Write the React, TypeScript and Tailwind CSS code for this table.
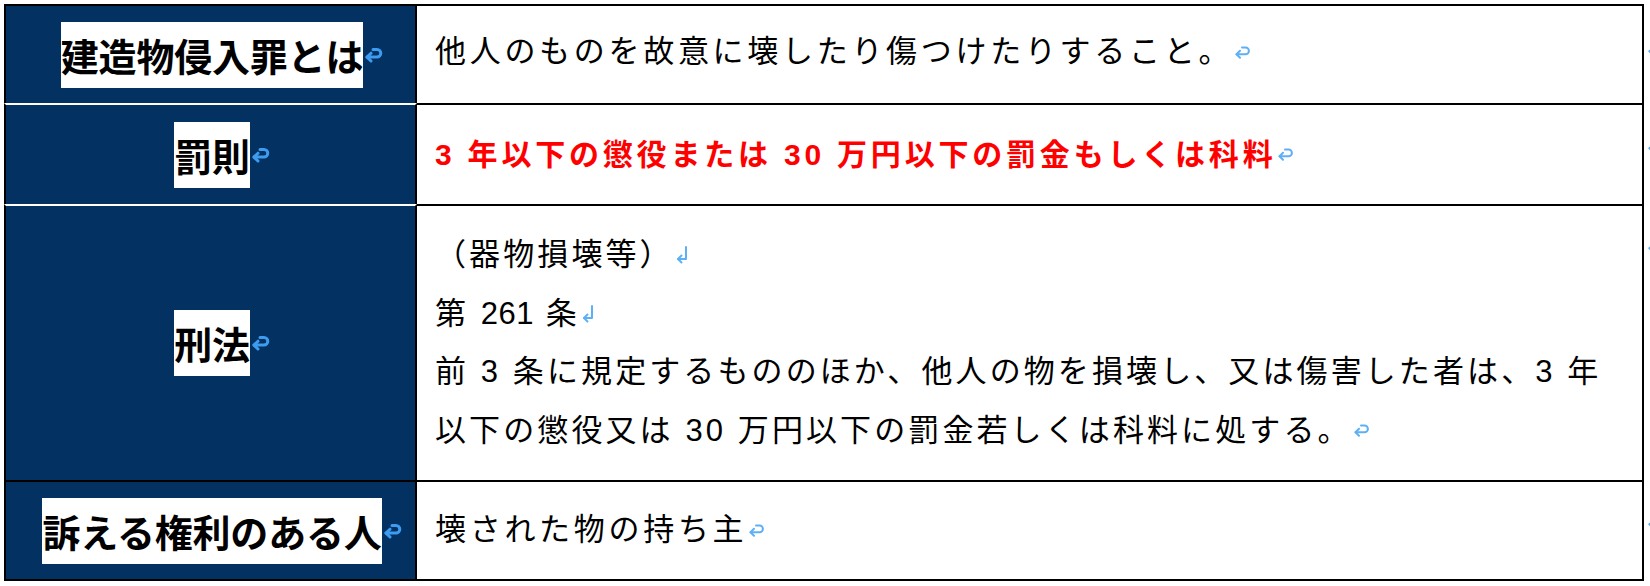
import React from "react";

function LabelMark() {
  return (
    <svg width="21" height="16" viewBox="0 0 21 16" className="shrink-0" aria-hidden="true">
      <path d="M10 2.5 H14 A3.8 3.8 0 0 1 14 10.1 H4" fill="none" stroke="#3d9cf0" strokeWidth="3" strokeLinecap="round" strokeLinejoin="round" />
      <path d="M8 6.2 L4 10.1 L8 14" fill="none" stroke="#3d9cf0" strokeWidth="3" strokeLinecap="round" strokeLinejoin="round" />
    </svg>
  );
}

function ParaMark() {
  return (
    <svg width="18" height="15" viewBox="0 0 18 15" className="shrink-0 inline-block" aria-hidden="true">
      <path d="M9 2.5 H12.5 A3.4 3.4 0 0 1 12.5 9.3 H3.5" fill="none" stroke="#5eb0f6" strokeWidth="2" strokeLinecap="round" strokeLinejoin="round" />
      <path d="M7 5.8 L3.5 9.3 L7 12.8" fill="none" stroke="#5eb0f6" strokeWidth="2" strokeLinecap="round" strokeLinejoin="round" />
    </svg>
  );
}

function BreakMark() {
  return (
    <svg width="16" height="20" viewBox="0 0 16 20" className="shrink-0 inline-block" aria-hidden="true">
      <path d="M12 2 V14 H4" fill="none" stroke="#5eb0f6" strokeWidth="2" strokeLinecap="round" strokeLinejoin="round" />
      <path d="M7.5 10.5 L4 14 L7.5 17.5" fill="none" stroke="#5eb0f6" strokeWidth="2" strokeLinecap="round" strokeLinejoin="round" />
    </svg>
  );
}

function Label({ text }: { text: string }) {
  return (
    <span className="inline-flex items-center">
      <span className="bg-white text-black font-bold text-[38px] leading-[66px] tracking-[-0.2px] whitespace-nowrap font-['Noto_Sans_CJK_JP',sans-serif]">
        {text}
      </span>
      <LabelMark />
    </span>
  );
}

const bodyFont =
  "text-black text-[31px] whitespace-nowrap font-['Liberation_Sans','Noto_Sans_CJK_JP',sans-serif]";

export default function App() {
  return (
    <div className="w-[1650px] h-[586px] overflow-hidden bg-white">
      <div className="pt-[4px] pl-[4px] flex flex-col">
        {/* Row 1 */}
        <div className="flex">
          <div className="w-[413px] h-[99px] shrink-0 bg-[#023162] border-l-2 border-r-2 border-t-2 border-black flex items-center justify-center pl-6">
            <Label text="建造物侵入罪とは" />
          </div>
          <div className="w-[1227px] h-[99px] shrink-0 border-r-2 border-t-2 border-black flex items-center pl-[18px] pb-[4px]">
            <span className={`${bodyFont} tracking-[3.7px] inline-flex items-center`}>
              <span>他人のものを故意に壊したり傷つけたりすること。</span>
              <ParaMark />
            </span>
          </div>
          <div className="pl-[2px] pt-[32px]">
            <ParaMark />
          </div>
        </div>

        {/* Row 2 */}
        <div className="flex">
          <div className="w-[413px] h-[101px] shrink-0 bg-[#023162] border-l-2 border-r-2 border-r-black border-l-black border-t-2 border-t-white flex items-center justify-center pl-6">
            <Label text="罰則" />
          </div>
          <div className="w-[1227px] h-[101px] shrink-0 border-r-2 border-t-2 border-black flex items-center pl-[18px]">
            <span className="inline-flex items-center text-[#ff0000] font-bold text-[30px] tracking-[3.8px] whitespace-nowrap font-['Liberation_Sans','Noto_Sans_CJK_JP',sans-serif]">
              <span>3 年以下の懲役または 30 万円以下の罰金もしくは科料</span>
              <ParaMark />
            </span>
          </div>
          <div className="pl-[2px] pt-[30px]">
            <ParaMark />
          </div>
        </div>

        {/* Row 3 */}
        <div className="flex">
          <div className="w-[413px] h-[276px] shrink-0 bg-[#023162] border-l-2 border-r-2 border-r-black border-l-black border-t-2 border-t-white flex items-center justify-center pl-6">
            <Label text="刑法" />
          </div>
          <div className="w-[1227px] h-[276px] shrink-0 border-r-2 border-t-2 border-black flex items-center pl-[18px]">
            <div className={`${bodyFont} tracking-[3.1px] flex flex-col leading-[58.5px]`}>
              <span className="inline-flex items-center">
                <span>（器物損壊等）</span>
                <BreakMark />
              </span>
              <span className="inline-flex items-center">
                <span>
                  第 <span className="tracking-[0.5px]">261</span> 条
                </span>
                <BreakMark />
              </span>
              <span>前 3 条に規定するもののほか、他人の物を損壊し、又は傷害した者は、3 年</span>
              <span className="inline-flex items-center">
                <span>以下の懲役又は 30 万円以下の罰金若しくは科料に処する。</span>
                <ParaMark />
              </span>
            </div>
          </div>
          <div className="pl-[2px] pt-[29px]">
            <ParaMark />
          </div>
        </div>

        {/* Row 4 */}
        <div className="flex">
          <div className="w-[413px] h-[101px] shrink-0 bg-[#023162] border-l-2 border-r-2 border-t-2 border-b-2 border-black flex items-center justify-center pl-6">
            <Label text="訴える権利のある人" />
          </div>
          <div className="w-[1227px] h-[101px] shrink-0 border-r-2 border-t-2 border-b-2 border-black flex items-center pl-[18px]">
            <span className={`${bodyFont} tracking-[3.7px] inline-flex items-center`}>
              <span>壊された物の持ち主</span>
              <ParaMark />
            </span>
          </div>
          <div className="pl-[2px] pt-[29px]">
            <ParaMark />
          </div>
        </div>
      </div>
    </div>
  );
}
